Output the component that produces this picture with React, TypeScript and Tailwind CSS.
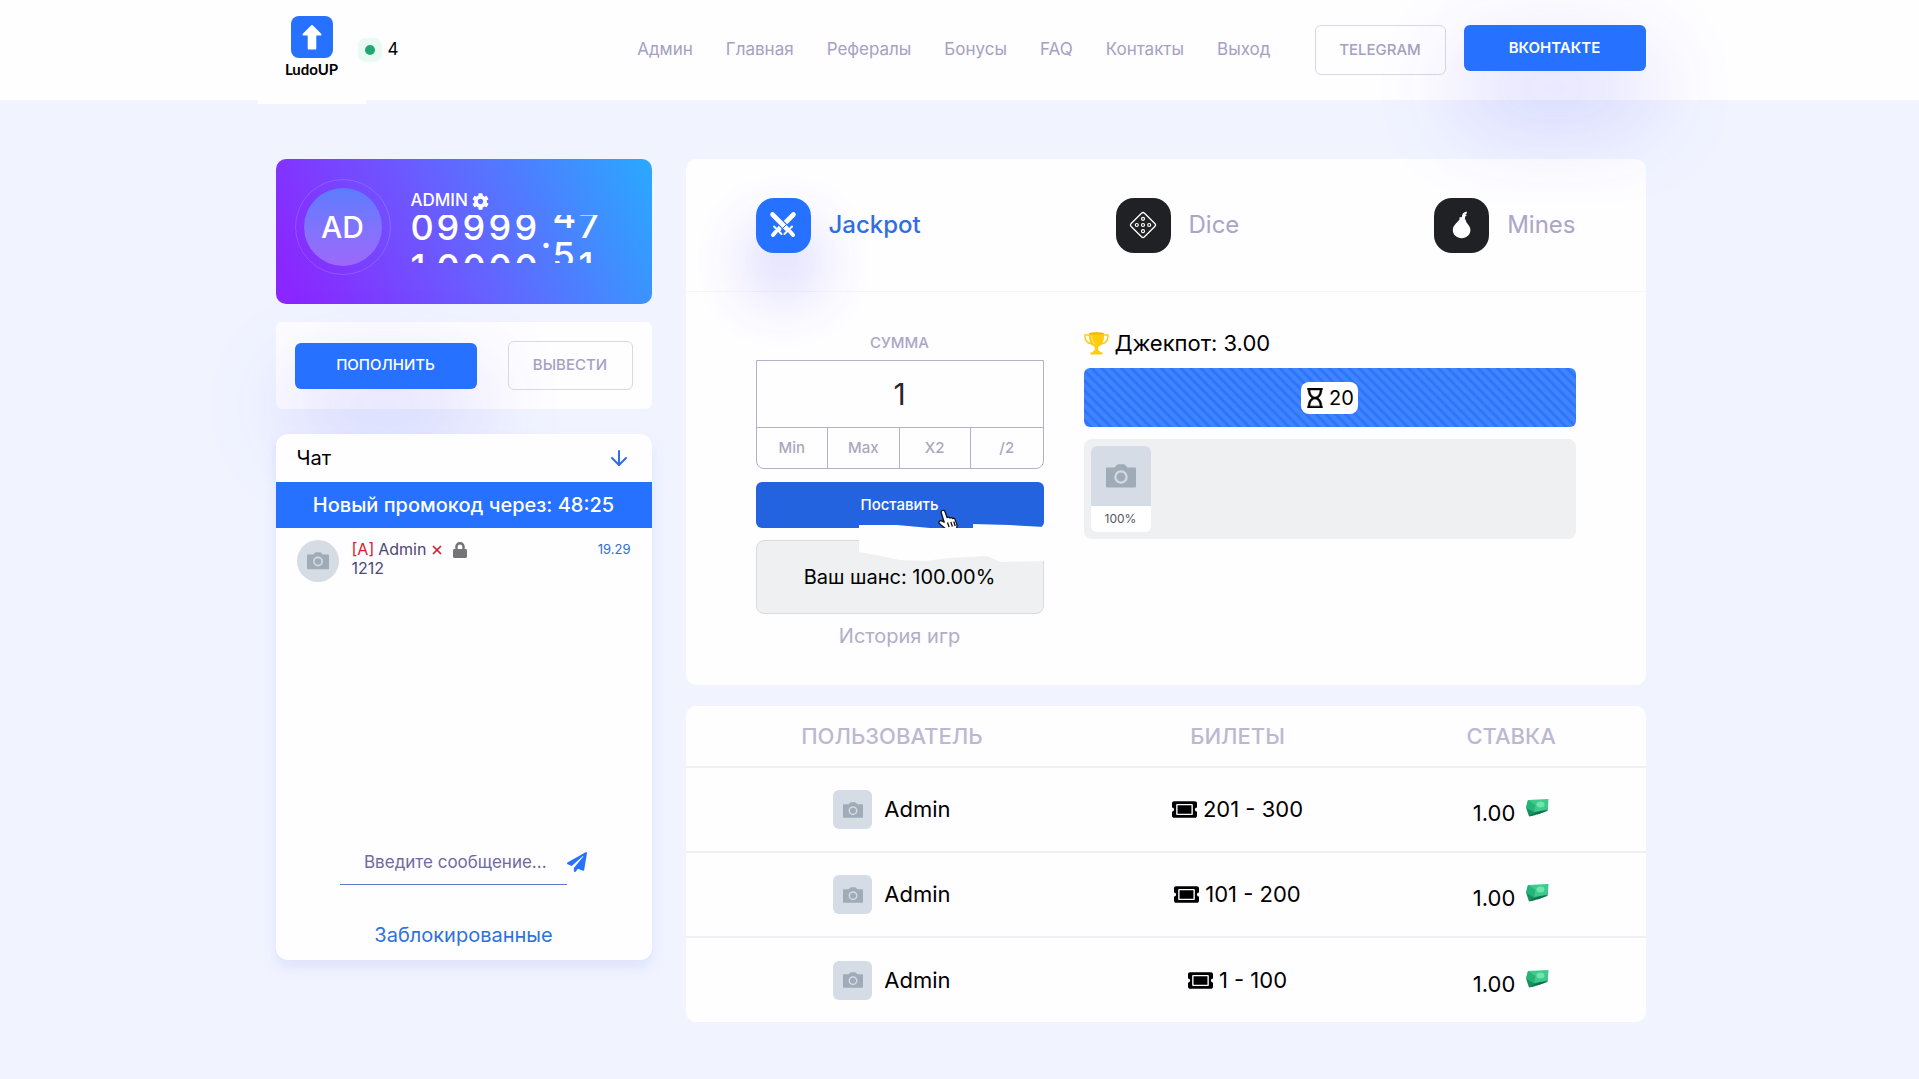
import { useState } from 'react';
import { FaCog, FaLock, FaPaperPlane, FaRegHourglass, FaTicketAlt } from 'react-icons/fa';
import { ArrowDown, X } from 'lucide-react';
import { clsx } from 'clsx';

const NAV = ['Админ', 'Главная', 'Рефералы', 'Бонусы', 'FAQ', 'Контакты', 'Выход'];

const BETS = [
  { id: 3, user: 'Admin', tickets: '201 - 300', amount: '1.00' },
  { id: 2, user: 'Admin', tickets: '101 - 200', amount: '1.00' },
  { id: 1, user: 'Admin', tickets: '1 - 100', amount: '1.00' }
];

// rolling balance counter: digits of each reel and how far it has scrolled
const REELS = [
  { digits: ['0', '1'], shift: 8 },
  { digits: ['9', '0'], shift: 8 },
  { digits: ['9', '0'], shift: 8 },
  { digits: ['9', '0'], shift: 8 },
  { digits: ['9', '0'], shift: 8 },
  { digits: ['.'], shift: 0 },
  { digits: ['4', '5'], shift: 20 },
  { digits: ['7', '1'], shift: 10 }
];

const GLOW = 'shadow-[0_40px_90px_rgba(70,70,255,0.28)]';

function CameraIcon({ className }: { className?: string }) {
  return (
    <svg viewBox="0 0 30 24" className={className} aria-hidden="true">
      <path
        fill="#9facb8"
        d="M1 3.500h7.500L11 .8Q11.600.2 12.400.2h5.200q.8 0 1.400.6l2.500 2.700H29q1 0 1 1v18q0 1-1 1H1q-1 0-1-1v-18q0-1 1-1z"
      />
      <circle cx="15" cy="13" r="5.600" fill="none" stroke="#d2dbe4" strokeWidth="2.200" />
    </svg>
  );
}

function LogoIcon() {
  return (
    <svg viewBox="0 0 42 42" className="size-[42px]" aria-hidden="true">
      <rect width="42" height="42" rx="8" fill="#2671ff" />
      <path
        d="M21 10 29.500 18.500h-5.200v14h-6.600v-14h-5.200z"
        fill="#fff"
        stroke="#fff"
        strokeWidth="2"
        strokeLinejoin="round"
      />
    </svg>
  );
}

function SwordsIcon() {
  return (
    <svg viewBox="0 0 28 28" className="size-7" aria-hidden="true">
      <g fill="none" stroke="#fff" strokeLinecap="round">
        <path d="M24.500 3.500 10 18" strokeWidth="4.600" />
        <path d="M7 20.500 4 24" strokeWidth="4" />
        <path d="M5 15.500 12.500 23" strokeWidth="2" />
        <path d="M3.500 3.500 18 18" stroke="#2671ff" strokeWidth="7" />
        <path d="M3.500 3.500 18 18" strokeWidth="4.600" />
        <path d="M21 20.500 24 24" strokeWidth="4" />
        <path d="M23 15.500 15.500 23" strokeWidth="2" />
        <path d="M12.500 18.500 17 14" stroke="#2671ff" strokeWidth="1" />
      </g>
    </svg>
  );
}

function DiceIcon() {
  return (
    <svg viewBox="0 0 28 28" className="size-7" fill="none" stroke="#fff" aria-hidden="true">
      <path
        d="M15.500 2.200 25.800 12.500q1.500 1.500 0 3L15.500 25.800q-1.500 1.500-3 0L2.200 15.500q-1.500-1.500 0-3L12.500 2.200q1.500-1.500 3 0z"
        strokeWidth="1.300"
      />
      <g strokeWidth="1.200">
        <circle cx="14" cy="7.800" r="1.500" />
        <circle cx="14" cy="14" r="1.500" />
        <circle cx="14" cy="20.200" r="1.500" />
        <circle cx="7.800" cy="14" r="1.500" />
        <circle cx="20.200" cy="14" r="1.500" />
      </g>
    </svg>
  );
}

function BombIcon() {
  return (
    <svg viewBox="0 0 28 28" className="size-7" fill="#fff" aria-hidden="true">
      <path d="M11.500 8.500V6.200h2.300C14 3 15.500 1.200 18.600.6l.4 1.600-1.600 1.200 1.300 1.300-1.600.8-.2 3 .8.200c.3 2.200 1.100 3.100 2.700 5.200 1.300 1.600 2 3.200 2 5.100 0 4.700-3.800 8.200-8.700 8.200s-8.900-3.500-8.900-8.200c0-2.100.8-3.800 2.300-5.500 1.900-2.200 2.900-3.300 4.400-5z" />
    </svg>
  );
}

function TrophyIcon() {
  return (
    <svg viewBox="0 0 25 23" className="h-[23px] w-[25px]" aria-hidden="true">
      <g fill="none" stroke="#ffca1a" strokeWidth="1.500">
        <path d="M5.500 3H1v1.500C1 9 4 11.500 8.500 12" />
        <path d="M19.500 3H24v1.500C24 9 21 11.500 16.500 12" />
      </g>
      <path
        fill="#ffcd0f"
        d="M5 1h15v3.500c0 5.500-2.300 9-5.800 10.300v3.200l1.800 1.300v1h2.500V22.500h-12V20.300H9v-1l1.800-1.300v-3.200C7.300 13.500 5 10 5 4.500z"
      />
      <ellipse cx="12.500" cy="1.400" rx="7.500" ry="1.200" fill="#f2b600" />
      <path d="M7.500 4c.2 4 1.300 6.500 3 8" fill="none" stroke="#ffe27a" strokeWidth="1.300" />
    </svg>
  );
}

function CashIcon() {
  return (
    <svg viewBox="0 0 24 20" className="h-5 w-6" aria-hidden="true">
      <path fill="#14915e" d="M1 9.500 4 18.500 9 17.500 22.500 13 23 9z" />
      <path fill="#3fc98a" d="M3 2 23.500 1 22.800 11.500 9 14 1 9.500z" />
      <path fill="#27b377" d="M3 2 1 9.500 9 14 10.500 7z" />
      <ellipse cx="15.500" cy="6.500" rx="4" ry="3" fill="#6ce5ae" />
      <path stroke="#0f6d47" strokeWidth="1.200" d="m5.500 17.500 11-4M12 16l8-3" />
    </svg>
  );
}

function HandCursor() {
  return (
    <svg viewBox="0 0 24 24" className="size-6" aria-hidden="true">
      <path
        fill="#fff"
        stroke="#111"
        strokeWidth="1.300"
        strokeLinejoin="round"
        d="M6.500 2.500c1-.5 2 0 2.400 1l2.300 6.200c.8-1 2.300-.7 2.700.4.8-.8 2.200-.6 2.600.5.900-.7 2.300-.3 2.600.8l1.700 5c.6 2 .2 3.300-.5 4.600v2.500h-9.500l-1-2.500c-1.600-1.300-4-3.200-6.200-5.400-1.600-1.600.1-3.600 2-2.700l2.600 1.400L5.300 5c-.4-1 .2-2.200 1.200-2.500z"
      />
      <path stroke="#111" strokeWidth="1.300" d="m11.500 14.500 1.600 4.500M14.800 14l1.600 4.500M17.800 13.500l1.400 4.500" />
    </svg>
  );
}

function Header() {
  return (
    <header className="relative z-10 bg-[#fefdff]">
      <div className="mx-auto flex h-[100px] max-w-[1372px] items-center justify-between pl-0.5">
        <div className="flex h-[104px] items-start self-start">
          <a
            href="#"
            className="-ml-[18px] flex h-[104px] w-[108px] flex-col items-center gap-px bg-[#fefdff] pt-4 font-['Lato','Inter',sans-serif] text-[15px] leading-5 font-bold text-black"
          >
            <LogoIcon />
            LudoUP
          </a>
          <div className="-ml-2 flex h-[100px] items-center gap-[6px] text-[17px] text-black">
            <span className="grid size-6 place-items-center rounded-lg bg-[#e9faf3]">
              <span className="size-[10px] rounded-full bg-[#1fa874]" />
            </span>
            4
          </div>
        </div>
        <div className="flex items-center">
          <nav className="flex gap-[33px] text-[17px] text-[#a5a1c0]">
            {NAV.map((item) => (
              <a key={item} href="#">
                {item}
              </a>
            ))}
          </nav>
          <a
            href="#"
            className="ml-11 flex h-[50px] w-[131px] items-center justify-center rounded-md border border-[#d8d8e4] text-[15px] font-medium text-[#a5a1c0]"
          >
            TELEGRAM
          </a>
          <a
            href="#"
            className={clsx(
              'mb-1 ml-[18px] flex h-[46px] w-[182px] items-center justify-center rounded-md bg-[#2671ff] text-[15px] font-semibold text-white',
              GLOW
            )}
          >
            ВКОНТАКТЕ
          </a>
        </div>
      </div>
    </header>
  );
}

function UserCard() {
  return (
    <section className="flex h-[145px] items-start rounded-[10px] bg-[linear-gradient(65deg,#8a26ff_5%,#6a5cff_45%,#29a9ff_100%)] pt-5 pl-[19px] text-white">
      <div className="grid size-24 place-items-center rounded-full border border-white/15">
        <div className="grid size-[78px] place-items-center rounded-full bg-linear-to-b from-[#5a7cff] to-[#9d68fa] text-3xl font-medium">
          AD
        </div>
      </div>
      <div className="ml-5 pt-3">
        <div className="flex h-5 items-center gap-1 text-[17px] font-medium">
          ADMIN
          <button type="button" aria-label="Настройки">
            <FaCog className="size-[17px]" />
          </button>
        </div>
        <div className="mt-1 flex h-12 overflow-hidden text-4xl leading-10 font-medium">
          {REELS.map((reel, index) => (
            <div
              key={index}
              className={clsx('flex shrink-0 flex-col', reel.digits.length > 1 ? 'w-[26px]' : 'w-3')}
              style={{ transform: `translateY(${-reel.shift}px)` }}
            >
              {reel.digits.map((digit) => (
                <span key={digit}>{digit}</span>
              ))}
            </div>
          ))}
        </div>
      </div>
    </section>
  );
}

function Chat() {
  const [message, setMessage] = useState('');

  return (
    <section className="relative mt-[25px] flex h-[526px] flex-col rounded-xl bg-[#fefdff] shadow-[0_8px_14px_rgba(80,110,230,0.12)]">
      <div className="flex h-12 items-center justify-between px-[21px]">
        <h2 className="text-xl text-black">Чат</h2>
        <button type="button" aria-label="Вниз" className="text-[#2f6ee6]">
          <ArrowDown className="size-6" />
        </button>
      </div>
      <div className="flex h-[46px] items-center justify-center bg-[#2671ff] text-xl font-medium text-white">
        Новый промокод через: 48:25
      </div>
      <div className="flex gap-[13px] px-[21px] pt-3">
        <div className="grid size-[42px] place-items-center rounded-full bg-[#d5dce3]">
          <CameraIcon className="w-[22px]" />
        </div>
        <div className="flex-1 text-base leading-[19px] text-[#4c4876]">
          <div className="flex items-center">
            <span className="mr-1 text-[#d8202a]">[A]</span>
            Admin
            <button type="button" aria-label="Удалить" className="ml-1 text-[#d8202a]">
              <X className="size-[14px]" strokeWidth={3} />
            </button>
            <button type="button" aria-label="Заблокировать" className="ml-2 text-[#757575]">
              <FaLock className="size-4" />
            </button>
          </div>
          <p>1212</p>
        </div>
        <time className="text-[13px] leading-[19px] text-[#2f6ed8]">19.29</time>
      </div>
      <form
        className="mt-auto flex items-start justify-center"
        onSubmit={(event) => {
          event.preventDefault();
          setMessage('');
        }}
      >
        <input
          aria-label="Сообщение"
          placeholder="Введите сообщение..."
          value={message}
          onChange={(event) => setMessage(event.target.value)}
          className="h-[46px] w-[227px] border-b border-[#5f7bc4] pl-6 text-[17px] text-[#4c4876] outline-none placeholder:text-[#6f6b9c]"
        />
        <button type="submit" aria-label="Отправить" className="mt-[13px] text-[#2671ff]">
          <FaPaperPlane className="size-5" />
        </button>
      </form>
      <a href="#" className="mt-9 mb-[11px] text-center text-xl leading-7 text-[#2f72dd]">
        Заблокированные
      </a>
    </section>
  );
}

function Sidebar() {
  return (
    <aside className="w-[376px] shrink-0">
      <UserCard />
      <div className="mt-[18px] flex h-[87px] items-center justify-between rounded-md bg-[#fefdff] px-[19px]">
        <button
          type="button"
          className={clsx('h-[46px] w-[182px] rounded-md bg-[#2671ff] text-[15px] font-medium text-white', GLOW)}
        >
          ПОПОЛНИТЬ
        </button>
        <button
          type="button"
          className="h-[49px] w-[125px] rounded-md border border-[#d8d8e4] text-[15px] font-medium text-[#a5a1c0]"
        >
          ВЫВЕСТИ
        </button>
      </div>
      <Chat />
    </aside>
  );
}

function GameTabs() {
  const tile = 'grid size-[55px] place-items-center rounded-[18px]';
  return (
    <div className="flex h-[133px] items-center justify-between border-b border-[#f6f5fb] px-[70px] text-2xl text-[#aaa6c4]">
      <a href="#" className="flex items-center gap-[18px] font-medium text-[#2f6fe0]">
        <span className={clsx(tile, 'bg-[#2671ff] shadow-[0_36px_60px_rgba(70,70,255,0.3)]')}>
          <SwordsIcon />
        </span>
        Jackpot
      </a>
      <a href="#" className="flex items-center gap-[18px]">
        <span className={clsx(tile, 'bg-[#202124]')}>
          <DiceIcon />
        </span>
        Dice
      </a>
      <a href="#" className="flex items-center gap-[18px]">
        <span className={clsx(tile, 'bg-[#202124]')}>
          <BombIcon />
        </span>
        Mines
      </a>
    </div>
  );
}

function BetForm() {
  const [amount, setAmount] = useState('1');

  return (
    <form className="w-[288px] text-center" onSubmit={(event) => event.preventDefault()}>
      <label htmlFor="amount" className="block pb-[5px] text-[15px] leading-6 font-medium text-[#aaa6c4]">
        СУММА
      </label>
      <div className="overflow-hidden rounded-b-lg border border-[#b3b1c6]">
        <input
          id="amount"
          value={amount}
          onChange={(event) => setAmount(event.target.value)}
          className="h-[66px] w-full text-center text-3xl text-[#26262c] outline-none"
        />
        <div className="grid grid-cols-4 divide-x divide-[#b3b1c6] border-t border-[#b3b1c6] text-[15px] font-medium text-[#aaa8b8]">
          <button type="button" className="h-10" onClick={() => setAmount('1')}>
            Min
          </button>
          <button type="button" className="h-10">
            Max
          </button>
          <button type="button" className="h-10" onClick={() => setAmount(String(Number(amount) * 2))}>
            X2
          </button>
          <button type="button" className="h-10" onClick={() => setAmount(String(Number(amount) / 2))}>
            /2
          </button>
        </div>
      </div>
      <div className="relative mt-[13px]">
        <button type="submit" className="h-[46px] w-full rounded-md bg-[#2463e0] text-[15px] font-medium text-white">
          Поставить
        </button>
        <div className="mt-3 flex h-[74px] items-center justify-center rounded-lg border border-[#d9dce0] bg-[#eef0f2] text-xl text-black">
          Ваш шанс: 100.00%
        </div>
        <span className="pointer-events-none absolute top-[26px] left-[180px]">
          <HandCursor />
        </span>
        <svg
          viewBox="0 0 188 40"
          className="pointer-events-none absolute top-[41px] -right-[3px] w-[188px]"
          aria-hidden="true"
        >
          <path
            fill="#fefdff"
            d="M0 2 38 2 71 5H114V1L150 2 186 4V38L142 39 128 33 90 35 66 38 40 37 22 33 0 29z"
          />
        </svg>
      </div>
      <a href="#" className="mt-2 block text-xl leading-7 text-[#b1aec6]">
        История игр
      </a>
    </form>
  );
}

function Pot() {
  return (
    <div className="w-[492px]">
      <div className="flex h-[25px] items-center gap-[6px] text-[22px] text-black">
        <TrophyIcon />
        <span>Джекпот: 3.00</span>
      </div>
      <div className="mt-3 flex h-[59px] items-center justify-center rounded-md bg-[repeating-linear-gradient(45deg,#4085ff_0px,#4085ff_3px,#2f75fb_4px,#2f75fb_6px,#4085ff_7px)]">
        <span className="flex h-8 items-center gap-1 rounded-lg bg-white px-1 text-xl text-black">
          <FaRegHourglass className="size-5" stroke="currentColor" strokeWidth={16} />
          20
        </span>
      </div>
      <div className="mt-3 h-[100px] rounded-lg bg-[#eef0f2] p-[7px]">
        <div className="w-[60px] overflow-hidden rounded-md bg-white text-center">
          <div className="grid h-[60px] place-items-center bg-[#d5dce5]">
            <CameraIcon className="w-[30px]" />
          </div>
          <div className="text-xs leading-[26px] text-[#55555c]">100%</div>
        </div>
      </div>
    </div>
  );
}

function BetsTable() {
  return (
    <div className="mt-[21px] overflow-hidden rounded-[10px] bg-[#fefdff]">
      <table className="w-full table-fixed text-center text-[22px] text-black">
        <thead>
          <tr className="h-[61px] border-b-2 border-[#f0f0f4] text-[#bcb9cf]">
            <th className="w-[43%] font-medium">ПОЛЬЗОВАТЕЛЬ</th>
            <th className="w-[29%] font-medium">БИЛЕТЫ</th>
            <th className="w-[28%] font-medium">СТАВКА</th>
          </tr>
        </thead>
        <tbody>
          {BETS.map((bet) => (
            <tr key={bet.id} className="h-[85px] border-b-2 border-[#f0f0f4] last:border-b-0">
              <td>
                <div className="flex items-center justify-center gap-3">
                  <span className="grid size-[39px] place-items-center rounded-md bg-[#d5dce5]">
                    <CameraIcon className="w-5" />
                  </span>
                  {bet.user}
                </div>
              </td>
              <td>
                <div className="flex items-center justify-center gap-[6px]">
                  <FaTicketAlt className="size-[25px]" />
                  {bet.tickets}
                </div>
              </td>
              <td>
                <div className="flex items-start justify-center gap-[10px] pt-1">
                  <span className="pt-1">{bet.amount}</span>
                  <span className="pt-[5px]">
                    <CashIcon />
                  </span>
                </div>
              </td>
            </tr>
          ))}
        </tbody>
      </table>
    </div>
  );
}

export default function App() {
  return (
    <div className="min-h-screen bg-[#f1f4ff] font-['Inter','Liberation_Sans',sans-serif]">
      <Header />
      <div className="mx-auto flex max-w-[1372px] items-start gap-[34px] pt-[59px] pb-14 pl-0.5">
        <Sidebar />
        <main className="min-w-0 flex-1">
          <section className="rounded-[10px] bg-[#fefdff]">
            <GameTabs />
            <div className="flex justify-between px-[70px] pt-[39px] pb-[35px]">
              <BetForm />
              <Pot />
            </div>
          </section>
          <BetsTable />
        </main>
      </div>
    </div>
  );
}
